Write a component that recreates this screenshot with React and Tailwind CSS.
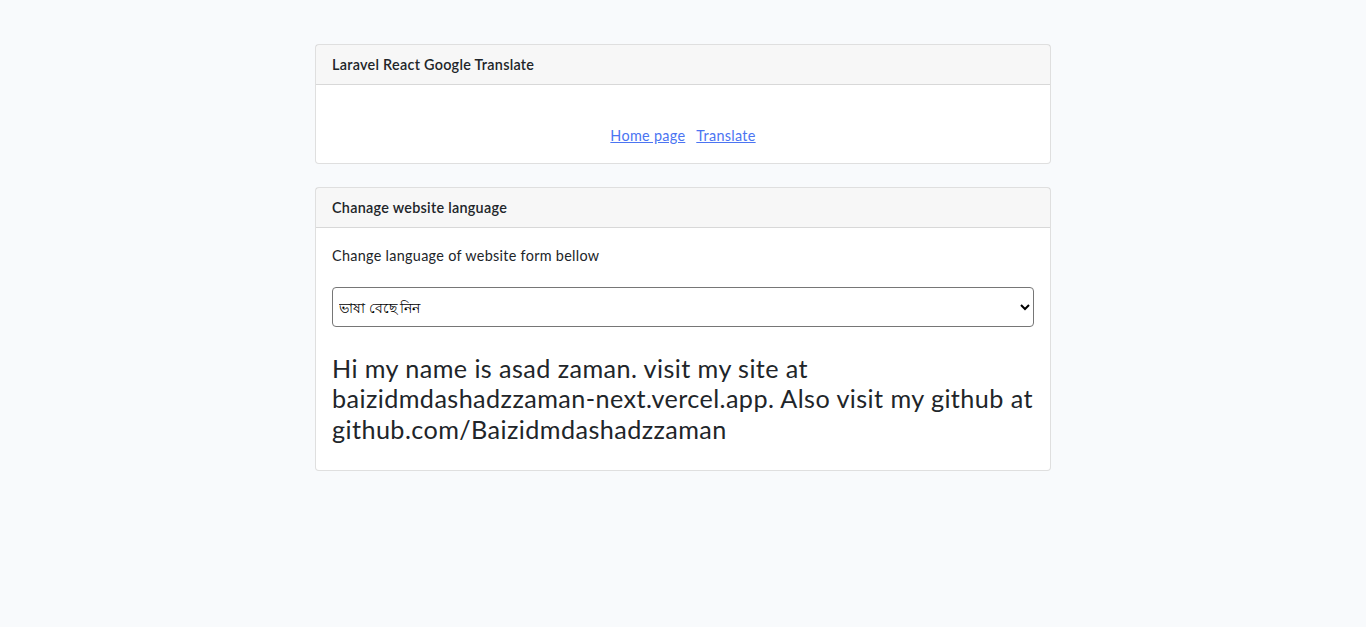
import React from "react";

const Card = ({ title, children }) => (
  <div className="bg-white border border-black/[0.125] rounded">
    <div className="px-4 py-2 bg-black/[0.03] border-b border-black/[0.125] font-semibold leading-[23px] tracking-[0.27px]">
      {title}
    </div>
    <div className="p-4">{children}</div>
  </div>
);

const App = () => {
  return (
    <div
      className="min-h-screen bg-[#f8fafc] text-[#212529] text-[14.4px] leading-[1.6]"
      style={{ fontFamily: "Lato, 'Noto Sans', sans-serif" }}
    >
      <div className="w-[736px] mx-auto pt-[44px] flex flex-col gap-[23px]">
        <Card title="Laravel React Google Translate">
          <div className="h-[23px]" />
          <div className="flex justify-center gap-[11px] tracking-[0.3px]">
            <a href="#" className="text-[#4b74f2] underline">Home page</a>
            <a href="#" className="text-[#4b74f2] underline">Translate</a>
          </div>
        </Card>

        <Card title="Chanage website language">
          <p className="mb-5 tracking-[0.3px]">Change language of website form bellow</p>
          <select className="w-full h-10 px-[2px] border border-[#767676] rounded text-[14px] text-black bg-white">
            <option>ভাষা বেছে নিন</option>
          </select>
          <h3 className="mt-[26px] mb-[10px] text-[25.2px] leading-[1.2] font-normal tracking-[0.42px]">
            Hi my name is asad zaman. visit my site at
            baizidmdashadzzaman-next.vercel.app. Also visit my github at
            github.com/Baizidmdashadzzaman
          </h3>
        </Card>
      </div>
    </div>
  );
};

export default App;
